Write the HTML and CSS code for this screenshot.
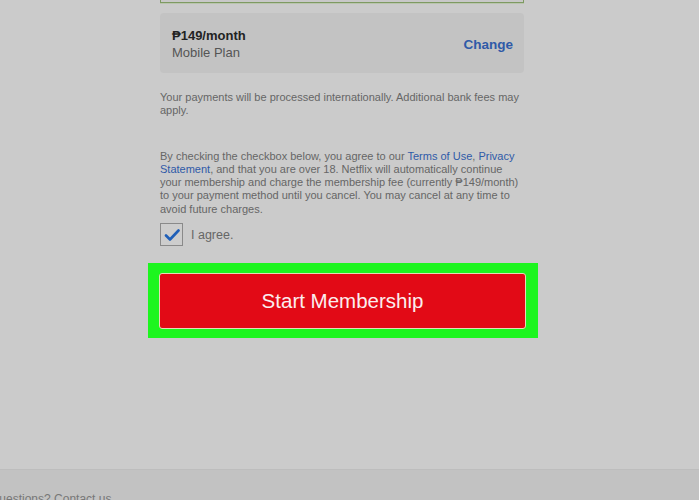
FILE: index.html
```html
<!DOCTYPE html>
<html>
<head>
<meta charset="utf-8">
<link rel="stylesheet" href="styles.css">
</head>
<body>
<div class="page">
  <main class="main">
    <div class="prev-box"></div>
    <div class="plan-card">
      <div class="plan-info">
        <div class="plan-price">₱149/month</div>
        <div class="plan-name">Mobile Plan</div>
      </div>
      <a class="change">Change</a>
    </div>
    <p class="note">Your payments will be processed internationally. Additional bank fees may apply.</p>
    <p class="terms">By checking the checkbox below, you agree to our <a class="link">Terms of Use</a>, <a class="link">Privacy Statement</a>, and that you are over 18. Netflix will automatically continue your membership and charge the membership fee (currently ₱149/month) to your payment method until you cancel. You may cancel at any time to avoid future charges.</p>
    <label class="agree">
      <span class="checkbox">
        <svg width="16" height="14" viewBox="0 0 16 14"><path d="M2 7.5 L6 11.5 L14.5 2.5" fill="none" stroke="#1f5fb8" stroke-width="2.6" stroke-linecap="round" stroke-linejoin="round"/></svg>
      </span>
      <span class="agree-text">I agree.</span>
    </label>
    <div class="highlight">
      <button class="start">Start Membership</button>
    </div>
  </main>
  <footer class="footer">
    <div class="footer-text">Questions? Contact us.</div>
  </footer>
</div>
</body>
</html>
```
FILE: styles.css
```css
html, body {
  margin: 0;
  padding: 0;
  height: 100%;
  overflow: hidden;
}
body {
  background: #cbcbcb;
  font-family: "Liberation Sans", Arial, sans-serif;
  color: #333;
}
.page {
  display: flex;
  flex-direction: column;
  height: 500px;
}
.main {
  width: 364px;
  margin-left: 160px;
  flex: 1;
}
.prev-box {
  height: 3px;
  margin-top: -1px;
  border: 1px solid #7e9a62;
  border-top: none;
  box-shadow: 0 1px 0 #b9c4ae;
  background: #c8c8c8;
}
.plan-card {
  margin-top: 10px;
  background: #c3c3c3;
  border-radius: 4px;
  height: 60px;
  display: flex;
  align-items: center;
  justify-content: space-between;
  padding: 0 11px 0 12px;
}
.plan-price {
  font-weight: bold;
  font-size: 13px;
  color: #222;
  line-height: 16px;
  margin-top: 2px;
}
.plan-name {
  font-size: 13px;
  color: #555;
  line-height: 17px;
}
.change {
  font-weight: bold;
  font-size: 13.5px;
  color: #2f5aa8;
  margin-top: 2px;
}
.note {
  margin: 18px 0 0;
  font-size: 11px;
  line-height: 13.3px;
  color: #666;
}
.terms {
  margin: 32px 0 0;
  font-size: 11px;
  line-height: 13.3px;
  color: #666;
}
.link {
  color: #2f5aa8;
}
.agree {
  display: flex;
  align-items: center;
  gap: 8px;
  margin-top: 7px;
}
.checkbox {
  width: 21px;
  height: 21px;
  border: 1px solid #8a8a8a;
  display: flex;
  align-items: center;
  justify-content: center;
  background: #cdcdcd;
}
.agree-text {
  font-size: 12.5px;
  color: #666;
}
.highlight {
  margin: 17px 0 0 -12px;
  width: 390px;
  height: 75px;
  background: #1df51f;
  display: flex;
  align-items: center;
  justify-content: flex-start;
  padding-left: 11px;
  box-sizing: border-box;
}
.start {
  width: 367px;
  height: 56px;
  background: #e20a16;
  border: 1px solid #e8d8b8;
  border-radius: 3px;
  color: #fbeeee;
  font-family: "Liberation Sans", Arial, sans-serif;
  font-size: 20.5px;
  padding: 0;
}
.footer {
  height: 30px;
  background: #c2c2c2;
  border-top: 1px solid #bdbdbd;
}
.footer-text {
  margin-top: 22px;
  margin-left: -10px;
  font-size: 12px;
  color: #777;
}
```
